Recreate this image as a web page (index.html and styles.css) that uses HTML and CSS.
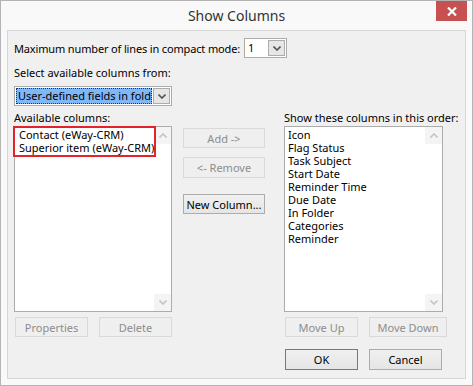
FILE: index.html
```html
<!DOCTYPE html>
<html>
<head>
  <meta charset="UTF-8">
  <title>Show Columns</title>
  <link rel="stylesheet" href="styles.css">
</head>
<body>
  <div class="window">
    <div class="titlebar">
      <span class="title">Show Columns</span>
      <button class="close"><svg width="10" height="9" viewBox="0 0 10 9"><path d="M1 0.5L9 8.5M9 0.5L1 8.5" stroke="#fff" stroke-width="2.2"/></svg></button>
    </div>

    <div class="client">
      <div class="row-lines">
        <span class="lines-label">Maximum number of lines in compact mode:</span>
        <div class="combo combo-small">
          <span class="val">1</span>
          <span class="drop"><svg width="8" height="5" viewBox="0 0 8 5"><path d="M0.5 0.5L4 4L7.5 0.5" fill="none" stroke="#555" stroke-width="1.6"/></svg></span>
        </div>
      </div>

      <div class="lbl lbl-from">Select available columns from:</div>
      <div class="combo combo-wide">
        <span class="val sel">User-defined fields in fold</span>
        <span class="drop"><svg width="8" height="5" viewBox="0 0 8 5"><path d="M0.5 0.5L4 4L7.5 0.5" fill="none" stroke="#555" stroke-width="1.6"/></svg></span>
      </div>

      <div class="columns">
        <div class="col col-left">
          <div class="lbl">Available columns:</div>
          <div class="list">
            <div class="items">
              <div>Contact (eWay-CRM)</div>
              <div>Superior item (eWay-CRM)</div>
            </div>
            <div class="scroll">
              <span class="arrow"><svg width="8" height="5" viewBox="0 0 8 5"><path d="M0.5 4.5L4 1L7.5 4.5" fill="none" stroke="#c4c4c4" stroke-width="1.6"/></svg></span>
              <span class="arrow"><svg width="8" height="5" viewBox="0 0 8 5"><path d="M0.5 0.5L4 4L7.5 0.5" fill="none" stroke="#c4c4c4" stroke-width="1.6"/></svg></span>
            </div>
            <div class="mark"></div>
          </div>
          <div class="btnrow">
            <button class="btn" disabled>Properties</button>
            <button class="btn" disabled>Delete</button>
          </div>
        </div>

        <div class="col col-mid">
          <button class="btn btn-mid" disabled>Add -&gt;</button>
          <button class="btn btn-mid btn-remove" disabled>&lt;- Remove</button>
          <button class="btn btn-mid btn-new">New Column...</button>
        </div>

        <div class="col col-right">
          <div class="lbl">Show these columns in this order:</div>
          <div class="list list-right">
            <div class="items">
              <div>Icon</div>
              <div>Flag Status</div>
              <div>Task Subject</div>
              <div>Start Date</div>
              <div>Reminder Time</div>
              <div>Due Date</div>
              <div>In Folder</div>
              <div>Categories</div>
              <div>Reminder</div>
            </div>
            <div class="scroll">
              <span class="arrow"><svg width="8" height="5" viewBox="0 0 8 5"><path d="M0.5 4.5L4 1L7.5 4.5" fill="none" stroke="#c4c4c4" stroke-width="1.6"/></svg></span>
              <span class="arrow"><svg width="8" height="5" viewBox="0 0 8 5"><path d="M0.5 0.5L4 4L7.5 0.5" fill="none" stroke="#c4c4c4" stroke-width="1.6"/></svg></span>
            </div>
          </div>
          <div class="btnrow">
            <button class="btn" disabled>Move Up</button>
            <button class="btn btn-wide" disabled>Move Down</button>
          </div>
          <div class="btnrow btnrow-ok">
            <button class="btn btn-ok">OK</button>
            <button class="btn">Cancel</button>
          </div>
        </div>
      </div>
    </div>
  </div>
</body>
</html>
```

FILE: styles.css
```css
body{margin:0;font-family:"Noto Sans","Open Sans",sans-serif;font-size:11px;color:#000;}

/* window frame */
.window{
  width:473px;height:386px;box-sizing:border-box;
  border:1px solid #b4b4b4;background:#f9f9f9;
  display:flex;flex-direction:column;
}
.titlebar{
  height:29px;flex:none;position:relative;
  display:flex;align-items:center;justify-content:center;
}
.title{font-size:14px;color:#333;}
.close{
  position:absolute;top:0;right:5px;width:31px;height:20px;
  border:0;padding:0;background:#c75050;
  display:flex;align-items:center;justify-content:center;
}

/* client area */
.client{
  flex:1;margin:0 6px 6px;
  border:1px solid #d6d6d6;background:#f0f0f0;
  padding:7px 0 0 6px;
}
.row-lines{display:flex;align-items:center;height:20px;}
.lines-label{width:230px;white-space:nowrap;letter-spacing:-0.15px;}
.lbl{line-height:16px;white-space:nowrap;}
.lbl-from{margin-top:7px;}

/* combo boxes */
.combo{
  display:flex;box-sizing:border-box;height:20px;
  border:1px solid #acacac;background:#fff;
}
.combo .val{flex:1;padding-left:3px;line-height:18px;}
.combo .drop{
  width:17px;margin:1px;box-sizing:border-box;
  border:1px solid #acacac;background:#e6e6e6;
  display:flex;align-items:center;justify-content:center;
}
.combo-small{width:43px;}
.combo-wide{width:158px;margin-top:5px;}
.combo .sel{
  margin:1px 0 1px 1px;padding-left:2px;line-height:16px;
  background:#80b7f7;outline:1px dotted #333;outline-offset:-1px;
  overflow:hidden;white-space:nowrap;
}

/* three columns */
.columns{display:flex;margin-top:4px;}
.col-left{width:158px;}
.col-mid{width:82px;margin-left:11px;padding-top:18px;display:flex;flex-direction:column;}
.col-right{width:163px;margin-left:19px;}

.list{
  position:relative;display:flex;box-sizing:border-box;
  width:158px;height:186px;
  border:1px solid #acacac;background:#fff;
}
.list-right{width:159px;}
.items{flex:1;padding:1px 0 0 4px;line-height:13px;white-space:nowrap;overflow:hidden;}
.list-right .items{padding-left:3px;color:#000;}
.scroll{width:17px;display:flex;flex-direction:column;justify-content:space-between;}
.scroll .arrow{
  height:17px;background:#f4f4f4;
  display:flex;align-items:center;justify-content:center;
}

/* annotation box */
.mark{
  position:absolute;left:-2px;top:-1px;width:143px;height:31px;
  box-sizing:border-box;border:2px solid #e3222b;
}

/* buttons */
.btn{
  box-sizing:border-box;width:73px;height:20px;padding:0;
  font-family:inherit;font-size:11px;color:#000;white-space:nowrap;
  border:1px solid #acacac;
  background:linear-gradient(#f0f0f0,#e5e5e5);
}
.btn:disabled{color:#8d8d8d;border-color:#d9d9d9;background:#efefef;}
.btn-mid{width:82px;}
.btn-remove{margin-top:9px;height:21px;}
.btn-new{margin-top:16px;}
.btn-wide{width:78px;}
.btnrow{display:flex;gap:11px;margin-top:5px;padding-left:1px;}
.btnrow-ok{margin-top:12px;}
.btnrow-ok .btn{height:21px;}
.btn-ok{border-color:#3c85d4;}
```
